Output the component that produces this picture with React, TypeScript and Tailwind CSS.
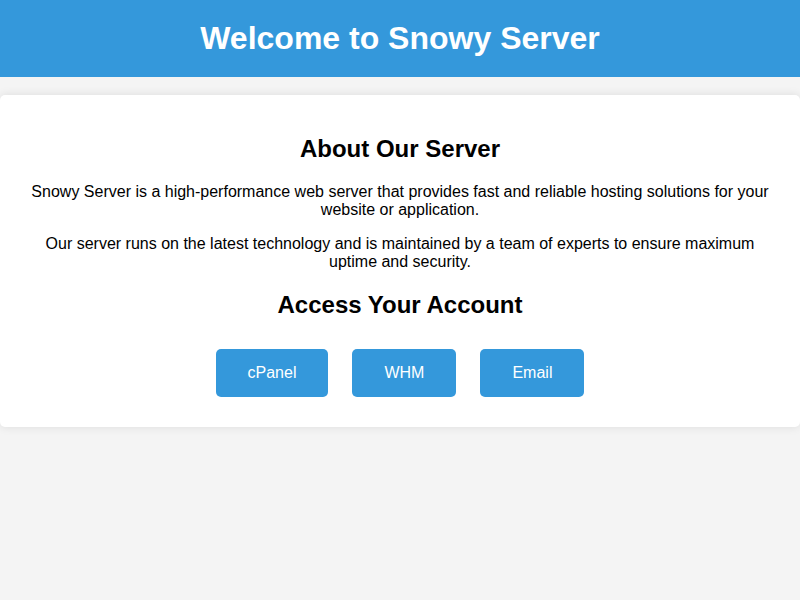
export default function App() {
  const links = ["cPanel", "WHM", "Email"];

  return (
    <div className="min-h-[600px] bg-[#f4f4f4] font-['Liberation_Sans',Arial,sans-serif] text-black">
      {/* Header */}
      <header className="bg-[#3498db] py-5 text-center text-white">
        <h1 className="text-[32px] font-bold leading-[37px]">
          Welcome to Snowy Server
        </h1>
      </header>

      {/* Main card */}
      <main className="mt-[18px] rounded-[5px] bg-white px-5 pt-5 pb-[30px] text-center shadow-[0_0_10px_rgba(0,0,0,0.1)]">
        <h2 className="mt-5 text-2xl leading-[28px] font-bold">About Our Server</h2>
        <p className="mt-5 text-base leading-[18px]">
          Snowy Server is a high-performance web server that provides fast and
          reliable hosting solutions for your website or application.
        </p>
        <p className="mt-4 text-base leading-[18px]">
          Our server runs on the latest technology and is maintained by a team
          of experts to ensure maximum uptime and security.
        </p>
        <h2 className="mt-5 text-2xl leading-[28px] font-bold">Access Your Account</h2>
        <div className="mt-[30px] flex justify-center gap-6">
          {links.map((label) => (
            <a
              key={label}
              href="#"
              className="rounded-[5px] bg-[#3498db] px-8 py-[15px] text-base leading-[18px] text-white"
            >
              {label}
            </a>
          ))}
        </div>
      </main>
    </div>
  );
}
